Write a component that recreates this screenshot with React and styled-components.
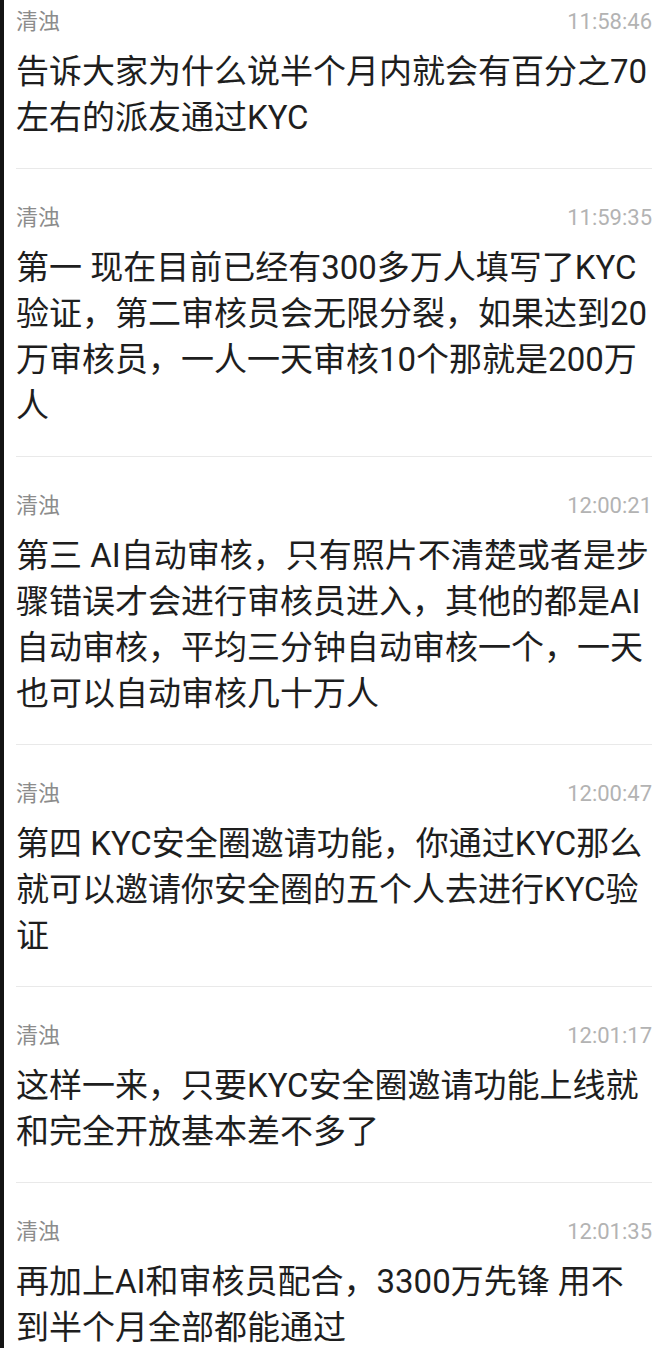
import React from 'react';
import styled, { createGlobalStyle } from 'styled-components';

const GlobalStyle = createGlobalStyle`
    html, body {
        margin: 0;
        padding: 0;
        background: #ffffff;
    }
    body {
        font-family: Roboto, "Noto Sans CJK SC", sans-serif;
        overflow: hidden;
    }
`;

const messages = [
    { name: '清浊', time: '11:58:46', text: '告诉大家为什么说半个月内就会有百分之70左右的派友通过KYC' },
    { name: '清浊', time: '11:59:35', text: '第一 现在目前已经有300多万人填写了KYC验证，第二审核员会无限分裂，如果达到20万审核员，一人一天审核10个那就是200万人' },
    { name: '清浊', time: '12:00:21', text: '第三 AI自动审核，只有照片不清楚或者是步骤错误才会进行审核员进入，其他的都是AI自动审核，平均三分钟自动审核一个，一天也可以自动审核几十万人' },
    { name: '清浊', time: '12:00:47', text: '第四 KYC安全圈邀请功能，你通过KYC那么就可以邀请你安全圈的五个人去进行KYC验证' },
    { name: '清浊', time: '12:01:17', text: '这样一来，只要KYC安全圈邀请功能上线就和完全开放基本差不多了' },
    { name: '清浊', time: '12:01:35', text: '再加上AI和审核员配合，3300万先锋 用不到半个月全部都能通过' },
];

function App() {
    return (
        <>
            <GlobalStyle />
            <Screen>
                <MessageList>
                    {messages.map((m, i) => (
                        <MessageItem key={i} $first={i === 0} $last={i === messages.length - 1}>
                            <MetaRow>
                                <Sender>{m.name}</Sender>
                                <Time>{m.time}</Time>
                            </MetaRow>
                            <Body>{m.text}</Body>
                        </MessageItem>
                    ))}
                </MessageList>
            </Screen>
        </>
    );
}

export default App;

const Screen = styled.div`
    height: 100vh;
    box-sizing: border-box;
    border-left: 4px solid #141414;
    background: #ffffff;
    overflow: hidden;
`;

const MessageList = styled.ul`
    list-style: none;
    margin: 0;
    padding: 0 19px 0 12px;
`;

const MessageItem = styled.li`
    padding: ${p => (p.$first ? '7px' : '34px')} 0 27px;
    border-bottom: ${p => (p.$last ? 'none' : '1px solid #e9e9e9')};
`;

const MetaRow = styled.div`
    display: flex;
    justify-content: space-between;
    align-items: center;
    height: 30px;
    margin-bottom: 12px;
`;

const Sender = styled.span`
    font-size: 22px;
    line-height: 30px;
    color: #8c8c8c;
`;

const Time = styled.span`
    font-size: 22px;
    line-height: 30px;
    color: #b3b3b3;
`;

const Body = styled.p`
    margin: 0;
    font-size: 33px;
    line-height: 46px;
    color: #1e1e1e;
    word-break: normal;
    line-break: strict;
`;
